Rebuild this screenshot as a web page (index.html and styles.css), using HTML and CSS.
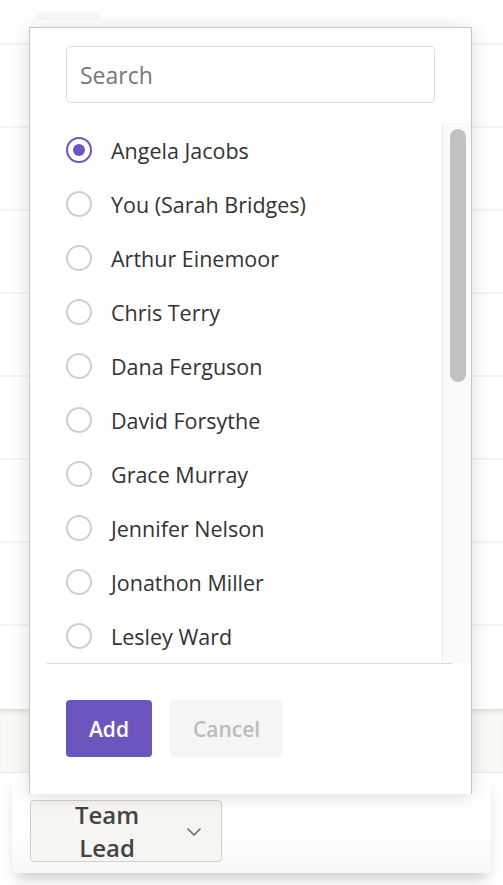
FILE: index.html
```html
<!DOCTYPE html>
<html>
<head>
<meta charset="utf-8">
<link rel="stylesheet" href="styles.css">
</head>
<body>
<div class="page">
  <div class="bg-row first"><span class="ghost"></span></div>
  <div class="bg-row"></div>
  <div class="bg-row"></div>
  <div class="bg-row"></div>
  <div class="bg-row"></div>
  <div class="bg-row"></div>
  <div class="bg-row"></div>
  <div class="bg-row"></div>
  <div class="bg-row last"></div>
  <div class="band"></div>
  <div class="card-row">
    <div class="role-btn">
      <span class="role-text">Team<br>Lead</span>
      <svg class="chev" width="16" height="10" viewBox="0 0 16 10"><path d="M1.5 1.5 L8 8 L14.5 1.5" fill="none" stroke="#666" stroke-width="1.5"/></svg>
    </div>
  </div>

  <div class="popup">
    <div class="search">Search</div>
    <div class="list-wrap">
      <div class="list">
        <div class="item"><span class="radio checked"></span><span class="name">Angela Jacobs</span></div>
        <div class="item"><span class="radio"></span><span class="name">You (Sarah Bridges)</span></div>
        <div class="item"><span class="radio"></span><span class="name">Arthur Einemoor</span></div>
        <div class="item"><span class="radio"></span><span class="name">Chris Terry</span></div>
        <div class="item"><span class="radio"></span><span class="name">Dana Ferguson</span></div>
        <div class="item"><span class="radio"></span><span class="name">David Forsythe</span></div>
        <div class="item"><span class="radio"></span><span class="name">Grace Murray</span></div>
        <div class="item"><span class="radio"></span><span class="name">Jennifer Nelson</span></div>
        <div class="item"><span class="radio"></span><span class="name">Jonathon Miller</span></div>
        <div class="item"><span class="radio"></span><span class="name">Lesley Ward</span></div>
      </div>
      <div class="scroll"><div class="thumb"></div></div>
    </div>
    <div class="divider"></div>
    <div class="actions">
      <div class="btn add">Add</div>
      <div class="btn cancel">Cancel</div>
    </div>
  </div>
</div>
</body>
</html>
```

FILE: styles.css
```css
* { box-sizing: border-box; }
html, body { margin: 0; padding: 0; background: #fff; }
body { font-family: "Open Sans", "Liberation Sans", sans-serif; width: 503px; height: 885px; overflow: hidden; }

.page { position: relative; width: 503px; height: 885px; }

.bg-row {
  height: 83px;
  border-bottom: 2px solid #f4f4f2;
}
.bg-row.first { height: 45px; position: relative; }
.bg-row.last { border-bottom: none; }
.ghost {
  position: absolute; left: 36px; top: 11px; width: 64px; height: 9px;
  background: #f8f8f8; border-radius: 3px;
}

.band {
  height: 64px;
  background: #f9f8f5;
  border-bottom: 1px solid #ececea;
  box-shadow: inset 0 5px 5px -3px rgba(0,0,0,0.12);
}

.card-row {
  margin: 0 12px;
  height: 100px;
  background: linear-gradient(#fff 60%, #f7f7f7);
  box-shadow: 0 10px 14px -5px rgba(0,0,0,0.22);
  padding: 27px 0 0 18px;
}

.role-btn {
  width: 192px; height: 62px;
  background: #f6f5f2;
  border: 1px solid #cfcfcb;
  border-radius: 4px;
  display: flex; align-items: center;
  padding-left: 38px;
}
.role-text {
  font-size: 24px; font-weight: 600; color: #444;
  line-height: 33px; text-align: center; width: 76px;
}
.chev { margin-left: 41px; margin-top: 2px; }

.popup {
  position: absolute; left: 29px; top: 27px;
  width: 443px; height: 767px;
  background: #fff;
  border: 1px solid #c6c6c6;
  border-bottom: none;
  box-shadow: 0 2px 18px rgba(0,0,0,0.14);
  padding-top: 18px;
}

.search {
  margin-left: 36px;
  width: 369px; height: 57px;
  border: 1px solid #dcdcdc; border-radius: 5px;
  font-size: 23px; color: #777;
  padding-left: 13px;
  display: flex; align-items: center;
}

.list-wrap {
  margin-top: 20px;
  margin-left: 17px;
  height: 540px;
  display: flex;
}
.list { flex: 1; overflow: hidden; }
.item {
  height: 54px; display: flex; align-items: center;
  padding-left: 19px;
}
.radio {
  width: 26px; height: 26px; border-radius: 50%;
  border: 2px solid #cfcfcf; flex: none;
  display: flex; align-items: center; justify-content: center;
}
.radio.checked { border-color: #6c56be; }
.radio.checked::after {
  content: ""; width: 12px; height: 12px; border-radius: 50%; background: #6c56be;
}
.name { margin-left: 19px; font-size: 21.5px; color: #333; }

.scroll {
  width: 29px; flex: none;
  background: #fafafa;
  border-left: 1px solid #e8e8e8;
  padding: 6px 0 0 7px;
}
.thumb {
  width: 16px; height: 253px; border-radius: 8px; background: #c1c1c1;
}

.divider { margin-left: 17px; width: 406px; height: 1px; background: #dcdcdc; }

.actions {
  display: flex; gap: 18px;
  margin-top: 36px; margin-left: 36px;
}
.btn {
  height: 57px; border-radius: 4px;
  display: flex; align-items: center; justify-content: center;
  font-size: 21px; font-weight: 600;
}
.add { width: 86px; background: #6c56be; color: #fff; }
.cancel { width: 113px; background: #f5f5f5; color: #bbb; }
```
